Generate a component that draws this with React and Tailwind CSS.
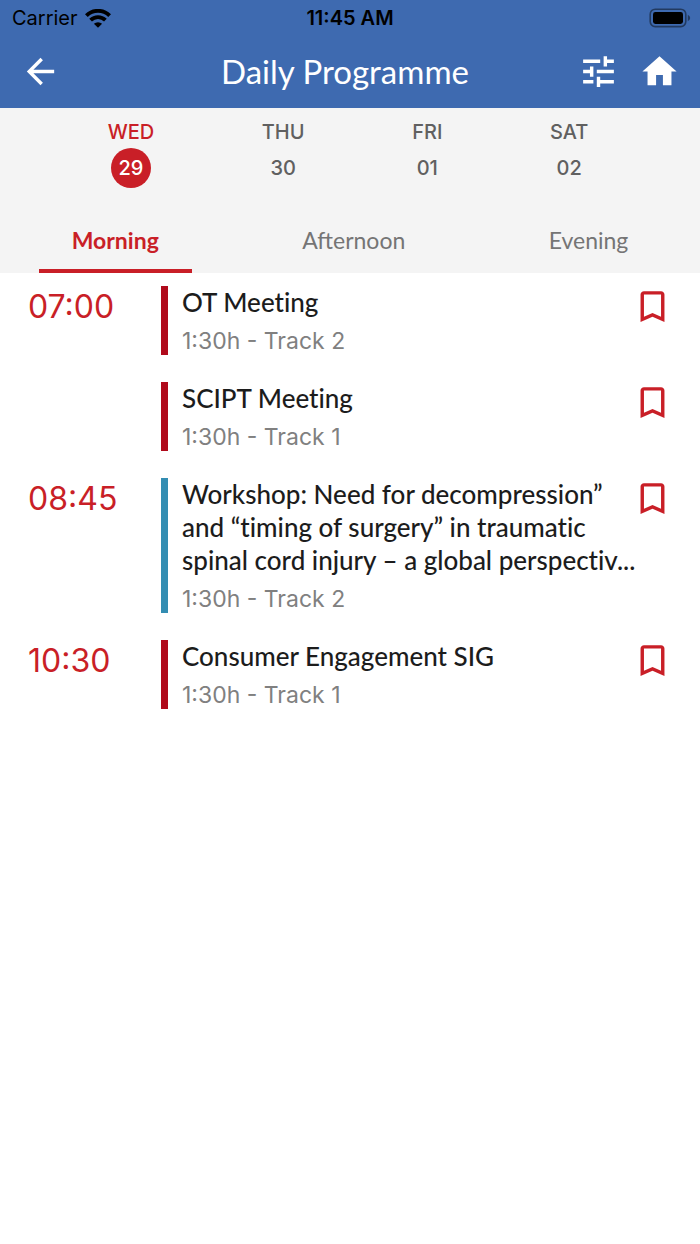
import React, { useState } from "react";

const DAYS = [
  { name: "WED", date: "29" },
  { name: "THU", date: "30" },
  { name: "FRI", date: "01" },
  { name: "SAT", date: "02" },
];

const PARTS = ["Morning", "Afternoon", "Evening"];

const SESSIONS = [
  { time: "07:00", title: "OT Meeting", info: "1:30h - Track 2", bar: "bg-[#b00a1b]" },
  { time: "", title: "SCIPT Meeting", info: "1:30h - Track 1", bar: "bg-[#b00a1b]" },
  {
    time: "08:45",
    title: "Workshop: Need for decompression” and “timing of surgery” in traumatic spinal cord injury – a global perspectiv...",
    info: "1:30h - Track 2",
    bar: "bg-[#338db2]",
  },
  { time: "10:30", title: "Consumer Engagement SIG", info: "1:30h - Track 1", bar: "bg-[#b00a1b]" },
];

function Icon({ d }) {
  return (
    <svg viewBox="0 0 24 24" className="size-[41px] shrink-0" fill="currentColor" aria-hidden="true">
      <path d={d} />
    </svg>
  );
}

function StatusBar() {
  return (
    <div className="grid h-9 grid-cols-[1fr_auto_1fr] items-center px-[9px] text-xl leading-6 text-black">
      <div className="flex items-center gap-[7px] pl-[3px]">
        <span>Carrier</span>
        <svg viewBox="0 0 26 19" className="h-[19px] w-[26px]" fill="none" stroke="currentColor" aria-hidden="true">
          <path d="M1.4 6.6 A16.6 16.6 0 0 1 24.6 6.6" strokeWidth="4" />
          <path d="M5.6 11.2 A10.4 10.4 0 0 1 20.4 11.2" strokeWidth="3.8" />
          <path d="M13 18.8 L8.9 14.8 A6 6 0 0 1 17.1 14.8 Z" fill="currentColor" stroke="none" />
        </svg>
      </div>
      <span className="text-center font-semibold">11:45 AM</span>
      <svg viewBox="0 0 42 20" className="h-5 w-[42px] justify-self-end" aria-hidden="true">
        <rect x="1.2" y="1.2" width="35.6" height="17.4" rx="5" fill="none" stroke="#000" strokeOpacity="0.45" strokeWidth="1.6" />
        <rect x="4" y="4" width="30" height="12" rx="2.4" fill="#000" />
        <path d="M38.8 6.8 Q41.2 8 41.2 10 Q41.2 12 38.8 13.2 Z" fill="#000" fillOpacity="0.45" />
      </svg>
    </div>
  );
}

export default function App() {
  const [day, setDay] = useState("29");
  const [part, setPart] = useState("Morning");

  return (
    <div className="min-h-screen bg-white font-['Inter',sans-serif]">
      <header className="bg-[#3e6ab0] text-white">
        <StatusBar />
        <div className="grid h-[72px] grid-cols-[1fr_auto_1fr] items-center px-5 pb-0.5">
          <button type="button" aria-label="Back" className="justify-self-start">
            <Icon d="M20 11H7.83l5.59-5.59L12 4l-8 8 8 8 1.41-1.41L7.83 13H20v-2z" />
          </button>
          <h1 className="pr-2.5 font-['Lato',sans-serif] text-[33px] leading-10">Daily Programme</h1>
          <div className="flex gap-5 justify-self-end">
            <button type="button" aria-label="Filter">
              <Icon d="M3 17v2h6v-2H3zM3 5v2h10V5H3zm10 16v-2h8v-2h-8v-2h-2v6h2zM7 9v2H3v2h4v2h2V9H7zm14 4v-2H11v2h10zm-6-4h2V7h4V5h-4V3h-2v6z" />
            </button>
            <button type="button" aria-label="Home">
              <Icon d="M10 20v-6h4v6h5v-8h3L12 3 2 12h3v8z" />
            </button>
          </div>
        </div>
      </header>

      <div className="bg-[#f4f4f4]">
        <nav aria-label="Day" className="flex justify-evenly pt-3 pr-1 text-xl leading-6 font-medium">
          {DAYS.map((d) => (
            <button
              key={d.date}
              type="button"
              onClick={() => setDay(d.date)}
              className={`flex flex-col items-center gap-1 ${d.date === day ? "text-[#c91f27]" : "text-[#606060]"}`}
            >
              <span>{d.name}</span>
              <span
                className={`-mx-2 flex size-10 items-center justify-center rounded-full ${
                  d.date === day ? "bg-[#c91f27] text-white" : ""
                }`}
              >
                {d.date}
              </span>
            </button>
          ))}
        </nav>
        <nav aria-label="Part of day" className="mt-5 flex justify-around font-['Lato',sans-serif] text-[23px] leading-8">
          {PARTS.map((p) => (
            <button
              key={p}
              type="button"
              onClick={() => setPart(p)}
              className={`border-b-4 px-[33px] pt-4 pb-[13px] ${
                p === part ? "border-[#c91f27] font-bold text-[#c91f27]" : "border-transparent text-[#757575]"
              }`}
            >
              {p}
            </button>
          ))}
        </nav>
      </div>

      <main className="flex flex-col gap-[27px] pt-[13px]">
        {SESSIONS.map((s) => (
          <article key={s.title} className="flex pr-[27px] pl-7">
            <time className="w-[133px] shrink-0 text-[32px] leading-[42px] text-[#c91f27]">{s.time}</time>
            <div className={`w-[7px] shrink-0 ${s.bar}`} />
            <div className="min-w-0 flex-1 pl-[14px]">
              <h2 className="font-['Lato',sans-serif] text-[26px] leading-[33px] font-medium text-[#1c1c1c] [font-variant-ligatures:none]">
                {s.title}
              </h2>
              <p className="mt-2 text-[23px] leading-7 text-[#808080]">{s.info}</p>
            </div>
            <button type="button" aria-label={`Bookmark ${s.title}`} className="-ml-2 self-start text-[#c91f27]">
              <Icon d="M17 3H7c-1.1 0-2 .9-2 2v16l7-3 7 3V5c0-1.1-.9-2-2-2zm0 15l-5-2.18L7 18V5h10v13z" />
            </button>
          </article>
        ))}
      </main>
    </div>
  );
}
